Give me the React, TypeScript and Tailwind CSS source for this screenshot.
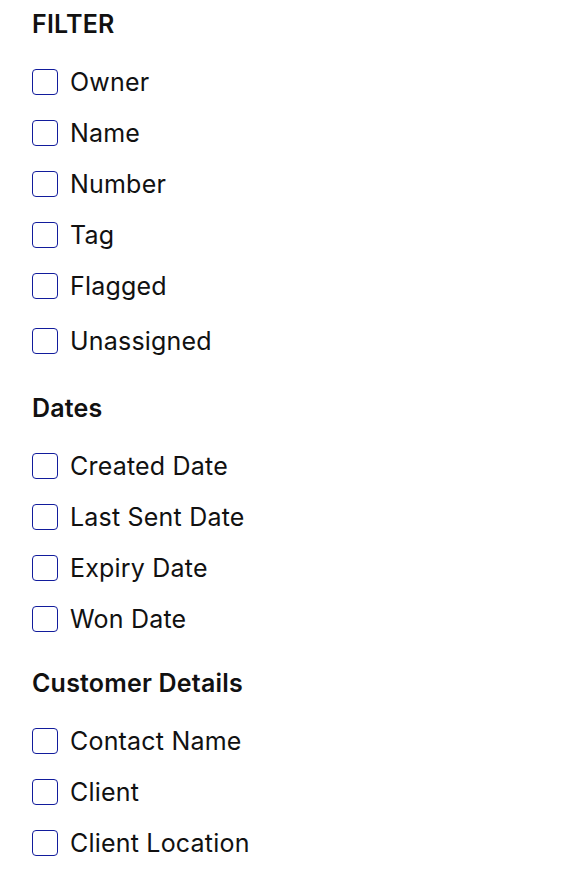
import { useState } from 'react';

const groups = [
  { title: 'FILTER', items: ['Owner', 'Name', 'Number', 'Tag', 'Flagged', 'Unassigned'] },
  { title: 'Dates', items: ['Created Date', 'Last Sent Date', 'Expiry Date', 'Won Date'] },
  { title: 'Customer Details', items: ['Contact Name', 'Client', 'Client Location'] },
];

const Check = ({ label, className = '' }: { label: string; className?: string }) => {
  const [on, setOn] = useState(false);
  return (
    <label className={`flex items-center gap-3 cursor-pointer ${className}`}>
      <span
        onClick={() => setOn(!on)}
        className={`w-[26px] h-[26px] shrink-0 rounded-[4px] border-[1.5px] border-[#121c9c] ${on ? 'bg-[#121c9c]' : 'bg-white'}`}
      ></span>
      <span className="text-[25px] leading-[32px] text-[#111] tracking-[0.2px]">{label}</span>
    </label>
  );
};

const App = () => {
  return (
    <div className="min-h-[876px] w-[574px] bg-white pl-8 pt-2 font-['Inter',sans-serif]">
      {groups.map((g, gi) => (
        <div key={g.title} className={gi === 1 ? 'mt-[35px]' : gi === 2 ? 'mt-[32px]' : ''}>
          <h2 className="text-[25px] leading-[32px] font-semibold text-[#111] tracking-[0.2px]">{g.title}</h2>
          <div className="mt-[26px] flex flex-col gap-[19px]">
            {g.items.map((it) => (
              <Check key={it} label={it} className={it === 'Unassigned' ? 'mt-[4px]' : ''} />
            ))}
          </div>
        </div>
      ))}
    </div>
  );
};

export default App;
